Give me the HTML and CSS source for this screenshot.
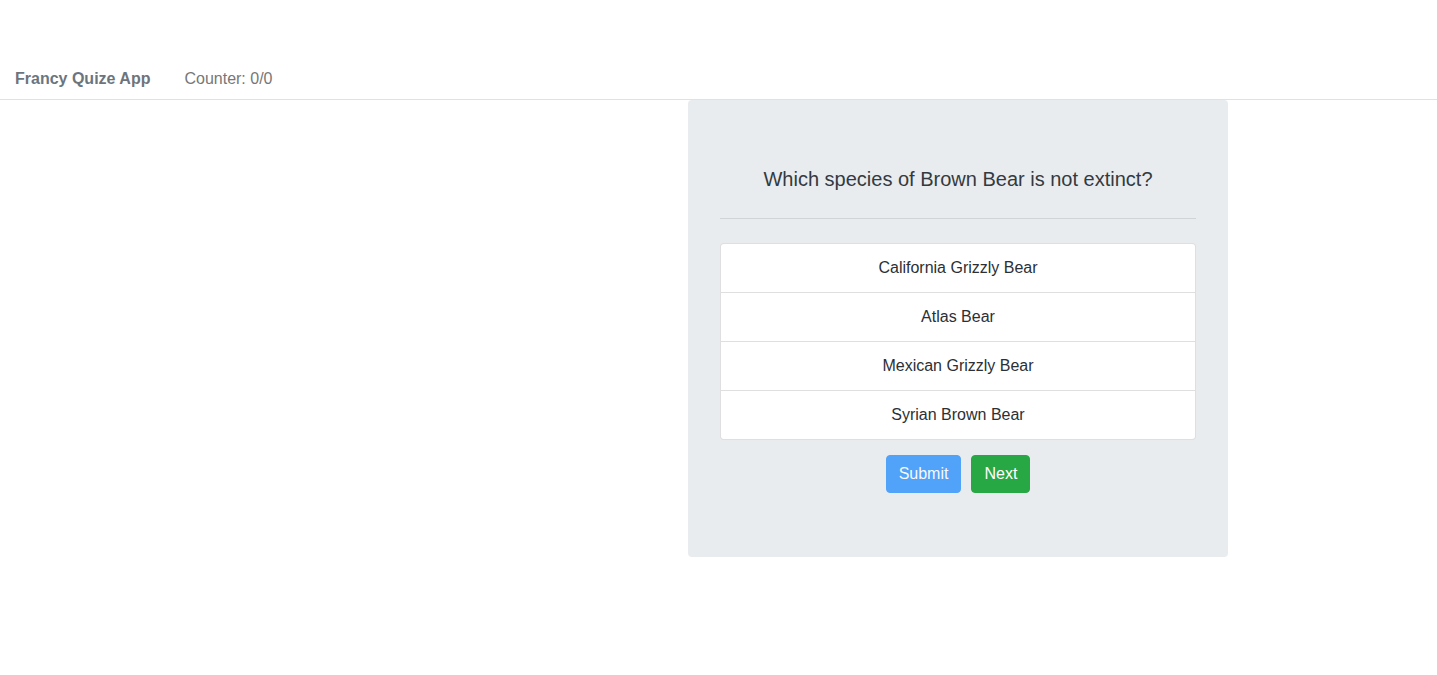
FILE: index.html
```html
<!DOCTYPE html>
<html lang="en">
<head>
<meta charset="utf-8">
<title>Francy Quize App</title>
<link rel="stylesheet" href="styles.css">
</head>
<body>
<nav class="navbar">
  <span class="brand">Francy Quize App</span>
  <span class="counter">Counter: 0/0</span>
</nav>
<main class="layout">
  <div class="spacer"></div>
  <section class="jumbotron">
    <p class="question">Which species of Brown Bear is not extinct?</p>
    <hr class="divider">
    <ul class="list-group">
      <li class="list-item">California Grizzly Bear</li>
      <li class="list-item">Atlas Bear</li>
      <li class="list-item">Mexican Grizzly Bear</li>
      <li class="list-item">Syrian Brown Bear</li>
    </ul>
    <div class="actions">
      <button class="btn btn-primary" disabled>Submit</button>
      <button class="btn btn-success">Next</button>
    </div>
  </section>
</main>
</body>
</html>
```
FILE: styles.css
```css
* { box-sizing: border-box; }
body {
  margin: 0;
  font-family: "Liberation Sans", Arial, sans-serif;
  font-size: 16px;
  line-height: 1.5;
  color: #212529;
  background: #fff;
}
.navbar {
  display: flex;
  align-items: center;
  gap: 34px;
  padding: 67px 15px 8px;
  border-bottom: 1px solid #dee2e6;
  line-height: 24px;
}
.brand {
  font-weight: bold;
  color: #6c757d;
}
.counter {
  color: #777;
}
.layout {
  display: grid;
  grid-template-columns: 688px 540px;
}
.jumbotron {
  background: #e9ecef;
  border-radius: 4px;
  padding: 64px 32px 64px;
}
.question {
  margin: 0;
  text-align: center;
  font-size: 20px;
  line-height: 30px;
  color: #343a40;
}
.divider {
  margin: 24px 0 24px;
  border: 0;
  border-top: 1px solid rgba(0,0,0,.1);
}
.list-group {
  list-style: none;
  margin: 0;
  padding: 0;
  background: #fff;
  border: 1px solid rgba(0,0,0,.125);
  border-radius: 4px;
}
.list-item {
  padding: 12px 20px;
  text-align: center;
  line-height: 24px;
  color: #2b3035;
}
.list-item + .list-item {
  border-top: 1px solid rgba(0,0,0,.125);
}
.actions {
  display: flex;
  justify-content: center;
  gap: 10px;
  margin-top: 15px;
}
.btn {
  font-family: inherit;
  font-size: 16px;
  line-height: 24px;
  padding: 6px 12px;
  border: 1px solid transparent;
  border-radius: 4px;
  color: #fff;
}
.btn-primary {
  background: #007bff;
  border-color: #007bff;
  opacity: .65;
}
.btn-success {
  background: #28a745;
  border-color: #28a745;
}
```
